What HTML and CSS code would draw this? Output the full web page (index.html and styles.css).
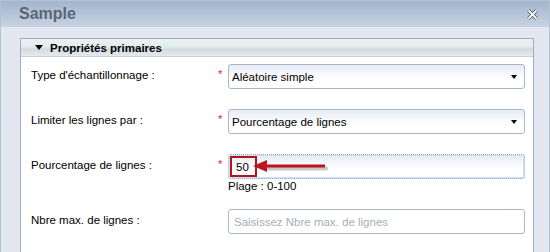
FILE: index.html
```html
<!DOCTYPE html>
<html lang="fr">
<head>
    <meta charset="UTF-8">
    <meta name="viewport" content="width=device-width, initial-scale=1.0">
    <title>Sample</title>
    <link rel="stylesheet" href="styles.css">
</head>
<body>
    <div class="window">
        <div class="titlebar">
            <span class="title">Sample</span>
            <svg class="close" width="11" height="11" viewBox="0 0 11 11">
                <path d="M1.5 1.5 L9.5 9.5 M9.5 1.5 L1.5 9.5" stroke="#3e4a5c" stroke-width="3.2"/>
                <path d="M1.5 1.5 L9.5 9.5 M9.5 1.5 L1.5 9.5" stroke="#ffffff" stroke-width="1.8"/>
            </svg>
        </div>
        <div class="content">
            <div class="section">
                <div class="section-head">
                    <span class="caret"></span>
                    <span>Propriétés primaires</span>
                </div>
                <div class="form">
                    <div class="row">
                        <label>Type d'échantillonnage :</label>
                        <span class="req">*</span>
                        <div class="select">Aléatoire simple<span class="arrow"></span></div>
                    </div>
                    <div class="row">
                        <label>Limiter les lignes par :</label>
                        <span class="req">*</span>
                        <div class="select">Pourcentage de lignes<span class="arrow"></span></div>
                    </div>
                    <div class="row with-hint">
                        <label>Pourcentage de lignes :</label>
                        <span class="req">*</span>
                        <div class="field-wrap">
                            <div class="input focus">
                                <span class="mark">50</span>
                                <svg class="pointer" width="80" height="14" viewBox="0 0 80 14">
                                    <path d="M14 8.5 L73 8.5" stroke="rgba(0,0,0,0.22)" stroke-width="4" stroke-linecap="round"/>
                                    <path d="M12 6 L72 6" stroke="#c0141c" stroke-width="3"/>
                                    <path d="M0 6 L14 0 L14 12 Z" fill="#c0141c"/>
                                </svg>
                            </div>
                            <div class="hint">Plage : 0-100</div>
                        </div>
                    </div>
                    <div class="row">
                        <label>Nbre max. de lignes :</label>
                        <span class="req"></span>
                        <div class="input placeholder">Saisissez Nbre max. de lignes</div>
                    </div>
                </div>
            </div>
        </div>
    </div>
</body>
</html>
```

FILE: styles.css
```css
body {
    margin: 0;
    font-family: "Liberation Sans", Arial, sans-serif;
    font-size: 11.5px;
    color: #000;
    background: #e3e7f1;
}
.window {
    width: 548px;
    height: 251px;
    border: 1px solid #b4c2d6;
    border-bottom: none;
    background: #e3e7f1;
    overflow: hidden;
}
.titlebar {
    height: 26px;
    display: flex;
    align-items: center;
    justify-content: space-between;
    padding: 0 11px 0 18px;
    background: linear-gradient(to bottom, #a3b5cd, #c7d3e3);
}
.title {
    font-weight: bold;
    font-size: 16px;
    color: #5b6577;
}
.content {
    padding: 11px 15px 0 19px;
}
.section {
    border: 1px solid #a7abb4;
    border-bottom: none;
    background: #fff;
    height: 214px;
}
.section-head {
    height: 17px;
    display: flex;
    align-items: center;
    gap: 7px;
    padding-left: 14px;
    font-weight: bold;
    background: linear-gradient(to bottom, #e9f2f3 0%, #e1ecee 45%, #d4dadd 60%, #e3e9ec 100%);
    border-bottom: 1px solid #c8cfd8;
}
.caret {
    width: 0;
    height: 0;
    border-left: 4px solid transparent;
    border-right: 4px solid transparent;
    border-top: 5px solid #000;
}
.form {
    padding: 7px 6px 0 10px;
}
.row {
    display: grid;
    grid-template-columns: 187px 10px 297px;
    align-items: start;
    margin-bottom: 20px;
}
.row.with-hint {
    margin-bottom: 16px;
}
.row label {
    padding-top: 5px;
}
.req {
    color: #e0303a;
    line-height: 12px;
    padding-top: 4px;
}
.select, .input {
    box-sizing: border-box;
    height: 25px;
    border: 1px solid #a9b6cb;
    border-radius: 3px;
    background: linear-gradient(to bottom, #e6ebf3, #ffffff 60%);
    display: flex;
    align-items: center;
    padding-left: 3px;
    position: relative;
}
.arrow {
    position: absolute;
    right: 7px;
    top: 10px;
    border-left: 3px solid transparent;
    border-right: 3px solid transparent;
    border-top: 4px solid #000;
}
.field-wrap {
    display: flex;
    flex-direction: column;
}
.input.focus {
    border: 1px dotted #7fa8d2;
    box-shadow: inset 0 0 0 1px #cfe0f1;
}
.mark {
    border: 2px solid #b6141c;
    padding: 3px 6px 2px 4px;
    margin-left: -2px;
}
.pointer {
    position: absolute;
    left: 24px;
    top: 5px;
}
.hint {
    line-height: 14px;
}
.input.placeholder {
    color: #a8adb5;
    background: #fff;
    padding-left: 5px;
}
```
